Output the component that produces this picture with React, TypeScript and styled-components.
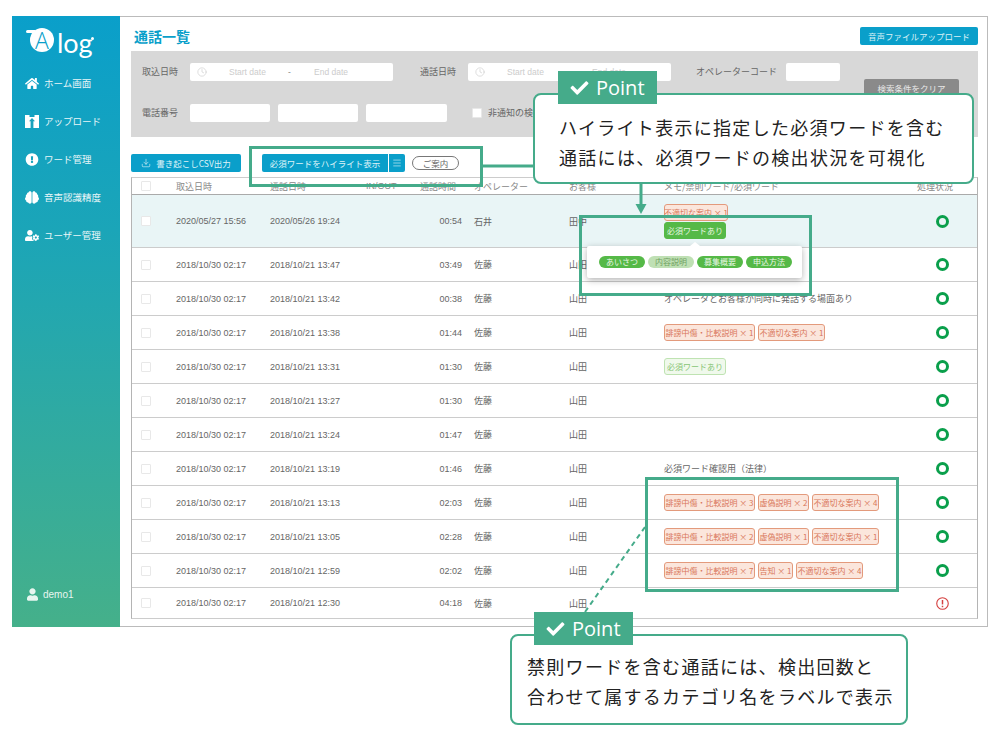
import React from "react";
import styled, {createGlobalStyle} from "styled-components";
import {FaBrain, FaCheck, FaExclamationCircle, FaHome, FaUser, FaUserCog} from "react-icons/fa";
import {Clock, Download, Menu} from "lucide-react";

const green = "#45ab8a";
const blue = "#0a9fca";

const GlobalStyle = createGlobalStyle`
  html, body {
    margin: 0;
    padding: 0;
    background: #fff;
  }
  body {
    font-family: "Liberation Sans", "Noto Sans CJK JP", sans-serif;
  }
  * {
    box-sizing: border-box;
  }
`;

const Page = styled.div`
  position: relative;
  width: 1000px;
  height: 740px;
  padding: 16px 0 0 12px;
  overflow: hidden;
`;

const Frame = styled.div`
  display: flex;
  width: 976px;
  height: 611px;
  border: 1px solid #bbb;
  border-left: none;
`;

const Sidebar = styled.aside`
  display: flex;
  flex-direction: column;
  flex: 0 0 108px;
  margin-top: -1px;
  margin-bottom: -1px;
  padding-top: 12px;
  padding-bottom: 26px;
  background: linear-gradient(180deg, #0a9fca 0%, #1ba5b8 35%, #45b08a 100%);
  color: #fff;
`;

const Logo = styled.div`
  display: flex;
  align-items: flex-start;
  height: 36px;
  padding-left: 18px;
`;

const LogoDisc = styled.span`
  position: relative;
  display: flex;
  align-items: center;
  justify-content: center;
  width: 24px;
  height: 24px;
  border-radius: 50%;
  background: #fff;
  color: #0a9fca;
  font-family: "Open Sans", sans-serif;
  font-size: 23px;
  font-weight: 300;
  line-height: 24px;
  &::before {
    content: "";
    position: absolute;
    top: 2px;
    left: -4px;
    width: 9px;
    height: 3px;
    border-radius: 2px 0 0 2px;
    background: #fff;
  }
`;

const LogoText = styled.span`
  position: relative;
  margin-left: 3px;
  font-family: "Lato", sans-serif;
  font-size: 27px;
  font-weight: 400;
  line-height: 30px;
  &::after {
    content: "";
    position: absolute;
    top: 9px;
    right: -1px;
    width: 3px;
    height: 3px;
    border-radius: 50%;
    background: #fff;
  }
`;

const NavItem = styled.div`
  display: flex;
  align-items: center;
  gap: 5px;
  height: 38px;
  padding-left: 13px;
  font-family: "Noto Sans CJK JP", sans-serif;
  font-size: 9.5px;
  color: #e8f6f8;
  svg {
    flex: 0 0 14px;
    width: 14px;
    height: 13px;
    color: #fff;
  }
`;

const UserRow = styled.div`
  display: flex;
  align-items: center;
  gap: 5px;
  margin-top: auto;
  padding-left: 15px;
  font-size: 10px;
  color: #e8f6f0;
  svg {
    width: 11px;
    height: 13px;
  }
`;

const Main = styled.main`
  flex: 1;
  min-width: 0;
  padding: 10px 9px 0 11px;
`;

const TitleRow = styled.div`
  display: flex;
  align-items: center;
  justify-content: space-between;
  height: 18px;
`;

const Title = styled.h1`
  margin: 0 0 0 3px;
  font-family: "Noto Sans CJK JP", sans-serif;
  font-size: 14px;
  font-weight: 700;
  color: ${blue};
`;

const UploadButton = styled.button`
  width: 118px;
  height: 18px;
  padding: 0;
  border: none;
  border-radius: 2px;
  background: ${blue};
  color: #d9f1f7;
  font-family: "Noto Sans CJK JP", sans-serif;
  font-size: 8.5px;
`;

const FilterPanel = styled.section`
  height: 86px;
  margin-top: 6px;
  padding: 12px 0 0 11px;
  background: #d8d8d8;
`;

const FilterRow = styled.div`
  display: flex;
  align-items: flex-start;
  height: 18px;
  margin-bottom: 23px;
`;

const FilterLabel = styled.label<{$w?: number; $ml?: number}>`
  flex: 0 0 ${(p) => p.$w ?? 48}px;
  margin-left: ${(p) => p.$ml ?? 0}px;
  font-family: "Noto Sans CJK JP", sans-serif;
  font-size: 9px;
  line-height: 18px;
  color: #666;
`;

const DateInput = styled.div`
  display: flex;
  align-items: center;
  flex: 0 0 203px;
  height: 18px;
  padding-left: 7px;
  border-radius: 2px;
  background: #fff;
  color: #ccc;
  font-size: 8.5px;
  svg {
    width: 10px;
    height: 10px;
  }
`;

const DateStart = styled.span`
  margin-left: 22px;
  width: 59px;
`;

const DateDash = styled.span`
  width: 26px;
  color: #888;
`;

const TextBox = styled.div<{$w: number; $ml?: number}>`
  flex: 0 0 ${(p) => p.$w}px;
  height: 18px;
  margin-left: ${(p) => p.$ml ?? 0}px;
  border-radius: 2px;
  background: #fff;
`;

const ClearButton = styled.button`
  flex: 0 0 95px;
  height: 18px;
  margin: 16px 0 0 24px;
  padding: 0;
  border: none;
  border-radius: 2px;
  background: #8a8a8a;
  color: #e8e8e8;
  font-family: "Noto Sans CJK JP", sans-serif;
  font-size: 8.5px;
`;

const Tick = styled.span<{$ml?: number}>`
  flex: 0 0 10px;
  align-self: center;
  width: 10px;
  height: 10px;
  margin-left: ${(p) => p.$ml ?? 0}px;
  border: 1px solid #e8e8e8;
  border-radius: 1px;
  background: #fff;
`;

const TickLabel = styled.span`
  margin-left: 6px;
  font-family: "Noto Sans CJK JP", sans-serif;
  font-size: 9px;
  line-height: 18px;
  color: #666;
`;

const ActionRow = styled.div`
  display: flex;
  align-items: center;
  height: 18px;
  margin-top: 17px;
`;

const BlueButton = styled.button<{$w: number; $ml?: number; $left?: boolean; $right?: boolean}>`
  display: flex;
  align-items: center;
  justify-content: center;
  gap: 5px;
  width: ${(p) => p.$w}px;
  height: 18px;
  margin-left: ${(p) => p.$ml ?? 0}px;
  padding: 0;
  border: none;
  border-radius: ${(p) => (p.$left ? "2px 0 0 2px" : p.$right ? "0 2px 2px 0" : "2px")};
  background: ${blue};
  color: #dff3f8;
  font-family: "Noto Sans CJK JP", sans-serif;
  font-size: 8.5px;
  svg {
    width: 10px;
    height: 10px;
  }
`;

const GuidePill = styled.span`
  display: flex;
  align-items: center;
  justify-content: center;
  width: 47px;
  height: 14px;
  margin-left: 7px;
  border: 1px solid #777;
  border-radius: 7px;
  font-family: "Noto Sans CJK JP", sans-serif;
  font-size: 8.5px;
  color: #666;
`;

const Table = styled.div`
  margin-top: 5px;
  border: 1px solid #b4b4b4;
  border-top-color: #ccc;
  border-bottom-color: #ccc;
`;

const Row = styled.div<{$h?: number; $active?: boolean; $head?: boolean}>`
  display: grid;
  grid-template-columns: 44px 94px 96px 54px 54px 95px 95px 251px 61px;
  align-items: center;
  height: ${(p) => p.$h ?? 34}px;
  border-bottom: 1px solid ${(p) => (p.$head ? "#aaa" : "#ccc")};
  background: ${(p) => (p.$active ? "#e9f5f6" : "#fff")};
  font-size: 9px;
  color: ${(p) => (p.$head ? "#888" : "#666")};
  &:last-child {
    border-bottom: none;
  }
`;

const CheckCell = styled.div`
  display: flex;
  padding-left: 9px;
`;

const Cell = styled.div`
  white-space: nowrap;
`;

const JaCell = styled(Cell)`
  font-family: "Noto Sans CJK JP", sans-serif;
`;

const TimeCell = styled(Cell)`
  padding-right: 12px;
  text-align: right;
`;

const MemoCell = styled.div<{$stack?: boolean}>`
  position: relative;
  display: flex;
  flex-direction: ${(p) => (p.$stack ? "column" : "row")};
  align-items: flex-start;
  gap: 1px 3px;
  font-family: "Noto Sans CJK JP", sans-serif;
  font-size: 9px;
  white-space: nowrap;
`;

const Tag = styled.span<{$w: number; $kind?: "warn" | "ok" | "okLight"}>`
  display: flex;
  align-items: center;
  justify-content: center;
  width: ${(p) => p.$w}px;
  height: 17px;
  border: 1px solid ${(p) => (p.$kind === "ok" ? "#55b947" : p.$kind === "okLight" ? "#bfe3b2" : "#e39a7c")};
  border-radius: 3px;
  background: ${(p) => (p.$kind === "ok" ? "#55b947" : p.$kind === "okLight" ? "#f0f9ec" : "#fbe6dc")};
  color: ${(p) => (p.$kind === "ok" ? "#e6f6e0" : p.$kind === "okLight" ? "#88c576" : "#d9765a")};
  font-size: 8px;
  white-space: nowrap;
`;

const Popover = styled.div`
  position: absolute;
  top: 42px;
  left: -77px;
  z-index: 1;
  display: flex;
  align-items: center;
  gap: 3px;
  width: 215px;
  height: 32px;
  padding-left: 12px;
  border-radius: 2px;
  background: #fff;
  box-shadow: 0 2px 7px rgba(0, 0, 0, 0.3);
  &::before {
    content: "";
    position: absolute;
    top: -4px;
    left: 103px;
    border-right: 5px solid transparent;
    border-bottom: 4px solid #fff;
    border-left: 5px solid transparent;
  }
`;

const Chip = styled.span<{$off?: boolean}>`
  display: flex;
  align-items: center;
  justify-content: center;
  width: 46px;
  height: 12px;
  border-radius: 6px;
  background: ${(p) => (p.$off ? "#bfe0b4" : "#55b947")};
  color: ${(p) => (p.$off ? "#6f9f60" : "#e9f7e4")};
  font-size: 8px;
`;

const StatusCell = styled.div`
  padding-left: 21px;
  svg {
    display: block;
    width: 13px;
    height: 13px;
    color: #d5403f;
  }
`;

const HeadStatus = styled(JaCell)`
  padding-left: 2px;
`;

const Ring = styled.span`
  display: block;
  width: 13px;
  height: 13px;
  border: 3px solid #0a9f4b;
  border-radius: 50%;
`;

const Connectors = styled.svg`
  position: absolute;
  top: 0;
  left: 0;
  z-index: 2;
`;

const MarkBox = styled.div`
  position: absolute;
  z-index: 2;
  border: 3px solid ${green};
`;

const HighlightMark = styled(MarkBox)`
  top: 146px;
  left: 249px;
  width: 234px;
  height: 41px;
`;

const PopoverMark = styled(MarkBox)`
  top: 215px;
  left: 579px;
  width: 233px;
  height: 81px;
`;

const TagsMark = styled(MarkBox)`
  top: 477px;
  left: 645px;
  width: 254px;
  height: 115px;
`;

const Callout = styled.div`
  position: absolute;
  z-index: 3;
  border: 2px solid ${green};
  border-radius: 8px;
  background: #fff;
  color: #222;
  font-family: "Noto Sans CJK JP", sans-serif;
  font-size: 18px;
  line-height: 30px;
  letter-spacing: 1.3px;
  white-space: nowrap;
`;

const TopCallout = styled(Callout)`
  top: 93px;
  left: 533px;
  width: 441px;
  height: 91px;
  padding: 17px 0 0 24px;
`;

const BottomCallout = styled(Callout)`
  top: 634px;
  left: 510px;
  width: 398px;
  height: 91px;
  padding: 15px 0 0 15px;
`;

const PointTag = styled.div`
  position: absolute;
  z-index: 4;
  display: flex;
  align-items: center;
  gap: 6px;
  width: 99px;
  height: 33px;
  padding-left: 11px;
  background: ${green};
  color: #fff;
  font-family: "Open Sans", sans-serif;
  font-size: 20px;
  svg {
    width: 21px;
    height: 18px;
  }
`;

const TopPoint = styled(PointTag)`
  top: 71px;
  left: 558px;
`;

const BottomPoint = styled(PointTag)`
  top: 612px;
  left: 534px;
`;

const UploadIcon = () => (
  <svg viewBox="0 0 14 13">
    <path d="M0 0 H4.5 V2 H9.5 V0 H14 V13 H0 Z" fill="currentColor" />
    <path d="M7 3 L10 6.2 H8.4 V13 H5.6 V6.2 H4 Z" fill="#1aa2bd" />
  </svg>
);

const AlertIcon = () => (
  <svg viewBox="0 0 14 14" fill="none" stroke="currentColor">
    <circle cx="7" cy="7" r="6.2" strokeWidth="1.2" />
    <path d="M7 3.2 V8" strokeWidth="1.6" />
    <path d="M7 9.4 V11" strokeWidth="1.6" />
  </svg>
);

type Memo = {text?: string; tags?: [string, number][]; okLight?: boolean};

const rows: {called: string; dur: string; memo?: Memo; alert?: boolean}[] = [
  {called: "13:47", dur: "03:49"},
  {called: "13:42", dur: "00:38", memo: {text: "オペレータとお客様が同時に発話する場面あり"}},
  {called: "13:38", dur: "01:44", memo: {tags: [["誹謗中傷・比較説明 × 1", 91], ["不適切な案内 × 1", 67]]}},
  {called: "13:31", dur: "01:30", memo: {okLight: true}},
  {called: "13:27", dur: "01:30"},
  {called: "13:24", dur: "01:47"},
  {called: "13:19", dur: "01:46", memo: {text: "必須ワード確認用（法律）"}},
  {called: "13:13", dur: "02:03", memo: {tags: [["誹謗中傷・比較説明 × 3", 91], ["虚偽説明 × 2", 51], ["不適切な案内 × 4", 67]]}},
  {called: "13:05", dur: "02:28", memo: {tags: [["誹謗中傷・比較説明 × 2", 91], ["虚偽説明 × 1", 51], ["不適切な案内 × 1", 67]]}},
  {called: "12:59", dur: "02:02", memo: {tags: [["誹謗中傷・比較説明 × 7", 91], ["告知 × 1", 35], ["不適切な案内 × 4", 67]]}},
  {called: "12:30", dur: "04:18", alert: true},
];

function DateRange() {
  return (
    <DateInput>
      <Clock strokeWidth={1.5} />
      <DateStart>Start date</DateStart>
      <DateDash>-</DateDash>
      <span>End date</span>
    </DateInput>
  );
}

export default function App() {
  return (
    <Page>
      <GlobalStyle />
      <Frame>
        <Sidebar>
          <Logo>
            <LogoDisc>A</LogoDisc>
            <LogoText>log</LogoText>
          </Logo>
          <NavItem><FaHome />ホーム画面</NavItem>
          <NavItem><UploadIcon />アップロード</NavItem>
          <NavItem><FaExclamationCircle />ワード管理</NavItem>
          <NavItem><FaBrain />音声認識精度</NavItem>
          <NavItem><FaUserCog />ユーザー管理</NavItem>
          <UserRow><FaUser />demo1</UserRow>
        </Sidebar>
        <Main>
          <TitleRow>
            <Title>通話一覧</Title>
            <UploadButton>音声ファイルアップロード</UploadButton>
          </TitleRow>
          <FilterPanel>
            <FilterRow>
              <FilterLabel>取込日時</FilterLabel>
              <DateRange />
              <FilterLabel $ml={27}>通話日時</FilterLabel>
              <DateRange />
              <FilterLabel $w={90} $ml={25}>オペレーターコード</FilterLabel>
              <TextBox $w={54} />
              <ClearButton>検索条件をクリア</ClearButton>
            </FilterRow>
            <FilterRow>
              <FilterLabel>電話番号</FilterLabel>
              <TextBox $w={80} />
              <TextBox $w={80} $ml={8} />
              <TextBox $w={81} $ml={8} />
              <Tick $ml={25} />
              <TickLabel>非通知の検索</TickLabel>
            </FilterRow>
          </FilterPanel>
          <ActionRow>
            <BlueButton $w={110}><Download strokeWidth={1.5} />書き起こしCSV出力</BlueButton>
            <BlueButton $w={126} $ml={21} $left>必須ワードをハイライト表示</BlueButton>
            <BlueButton $w={16} $ml={1} $right><Menu strokeWidth={1.5} /></BlueButton>
            <GuidePill>ご案内</GuidePill>
          </ActionRow>
          <Table>
            <Row $h={17} $head>
              <CheckCell><Tick /></CheckCell>
              <JaCell>取込日時</JaCell>
              <JaCell>通話日時</JaCell>
              <Cell>IN/OUT</Cell>
              <JaCell>通話時間</JaCell>
              <JaCell>オペレーター</JaCell>
              <JaCell>お客様</JaCell>
              <JaCell>メモ/禁則ワード/必須ワード</JaCell>
              <HeadStatus>処理状況</HeadStatus>
            </Row>
            <Row $h={53} $active>
              <CheckCell><Tick /></CheckCell>
              <Cell>2020/05/27 15:56</Cell>
              <Cell>2020/05/26 19:24</Cell>
              <Cell />
              <TimeCell>00:54</TimeCell>
              <JaCell>石井</JaCell>
              <JaCell>田中</JaCell>
              <MemoCell $stack>
                <Tag $w={64}>不適切な案内 × 1</Tag>
                <Tag $w={62} $kind="ok">必須ワードあり</Tag>
                <Popover>
                  <Chip>あいさつ</Chip>
                  <Chip $off>内容説明</Chip>
                  <Chip>募集概要</Chip>
                  <Chip>申込方法</Chip>
                </Popover>
              </MemoCell>
              <StatusCell><Ring /></StatusCell>
            </Row>
            {rows.map((r) => (
              <Row key={r.called} $h={r.alert ? 30 : 34}>
                <CheckCell><Tick /></CheckCell>
                <Cell>2018/10/30 02:17</Cell>
                <Cell>2018/10/21 {r.called}</Cell>
                <Cell />
                <TimeCell>{r.dur}</TimeCell>
                <JaCell>佐藤</JaCell>
                <JaCell>山田</JaCell>
                <MemoCell>
                  {r.memo?.text}
                  {r.memo?.okLight && <Tag $w={62} $kind="okLight">必須ワードあり</Tag>}
                  {r.memo?.tags?.map(([label, w]) => <Tag key={label} $w={w}>{label}</Tag>)}
                </MemoCell>
                <StatusCell>
                  {r.alert ? <AlertIcon /> : <Ring />}
                </StatusCell>
              </Row>
            ))}
          </Table>
        </Main>
      </Frame>

      <HighlightMark />
      <PopoverMark />
      <TagsMark />
      <Connectors width="1000" height="740" viewBox="0 0 1000 740">
        <line x1="482" y1="166" x2="534" y2="166" stroke={green} strokeWidth="3" />
        <line x1="641" y1="183" x2="641" y2="206" stroke={green} strokeWidth="3" />
        <path d="M635.5 204 H646.5 L641 214 Z" fill={green} />
        <line x1="645" y1="527" x2="585" y2="612" stroke={green} strokeWidth="2" strokeDasharray="5 4" />
      </Connectors>

      <TopCallout>
        ハイライト表示に指定した必須ワードを含む
        <br />
        通話には、必須ワードの検出状況を可視化
      </TopCallout>
      <TopPoint><FaCheck />Point</TopPoint>

      <BottomCallout>
        禁則ワードを含む通話には、検出回数と
        <br />
        合わせて属するカテゴリ名をラベルで表示
      </BottomCallout>
      <BottomPoint><FaCheck />Point</BottomPoint>
    </Page>
  );
}
